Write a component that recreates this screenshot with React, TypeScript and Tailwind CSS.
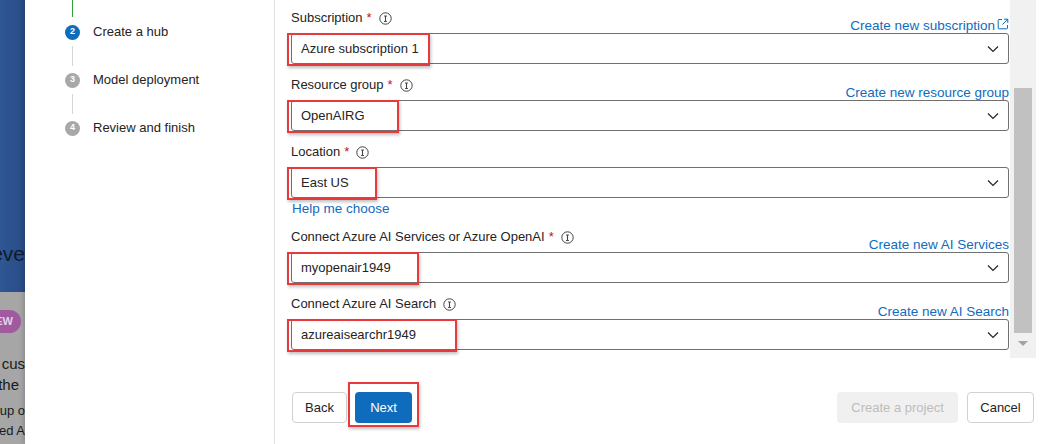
import React from 'react';

const font = { fontFamily: '"Liberation Sans", Arial, sans-serif' };

const InfoIcon = () => (
  <svg width="13" height="13" viewBox="0 0 13 13" className="ml-[7px] shrink-0">
    <circle cx="6.5" cy="6.5" r="5.7" fill="none" stroke="#424242" strokeWidth="1" />
    <line x1="6.5" y1="4" x2="6.5" y2="9.5" stroke="#424242" strokeWidth="1.1" />
    <line x1="5" y1="4" x2="8" y2="4" stroke="#424242" strokeWidth="0.9" />
    <line x1="5" y1="9.5" x2="8" y2="9.5" stroke="#424242" strokeWidth="0.9" />
  </svg>
);

const Chevron = () => (
  <svg width="12" height="8" viewBox="0 0 12 8" className="shrink-0">
    <path d="M1 1.5 L6 6.5 L11 1.5" fill="none" stroke="#242424" strokeWidth="1.2" />
  </svg>
);

const ExternalIcon = () => (
  <svg width="12" height="12" viewBox="0 0 12 12" className="ml-[2px] mb-[3px]">
    <path d="M5 1.5 H2 a0.8 0.8 0 0 0 -0.8 0.8 V10 a0.8 0.8 0 0 0 0.8 0.8 H9.7 a0.8 0.8 0 0 0 0.8 -0.8 V7" fill="none" stroke="#0f6cbd" strokeWidth="1" />
    <path d="M7 1.2 H10.8 V5 M10.8 1.2 L5.5 6.5" fill="none" stroke="#0f6cbd" strokeWidth="1" />
  </svg>
);

type Field = {
  label: string;
  required: boolean;
  link: string;
  external?: boolean;
  value: string;
  mark: number;
  help?: boolean;
};

const fields: Field[] = [
  { label: 'Subscription', required: true, link: 'Create new subscription', external: true, value: 'Azure subscription 1', mark: 143 },
  { label: 'Resource group', required: true, link: 'Create new resource group', value: 'OpenAIRG', mark: 112 },
  { label: 'Location', required: true, link: '', value: 'East US', mark: 90, help: true },
  { label: 'Connect Azure AI Services or Azure OpenAI', required: true, link: 'Create new AI Services', value: 'myopenair1949', mark: 132 },
  { label: 'Connect Azure AI Search', required: false, link: 'Create new AI Search', value: 'azureaisearchr1949', mark: 170 },
];

const steps = [
  { n: 2, label: 'Create a hub', active: true },
  { n: 3, label: 'Model deployment', active: false },
  { n: 4, label: 'Review and finish', active: false },
];

const App: React.FC = () => {
  return (
    <div className="w-[1048px] h-[444px] flex overflow-hidden bg-white text-[#242424]" style={font}>
      {/* page behind the dialog */}
      <div className="w-[25px] h-full flex flex-col shrink-0 overflow-hidden">
        <div className="h-[292px] bg-gradient-to-r from-[#2f5794] to-[#284c85] flex flex-col justify-end pb-[26px] overflow-hidden">
          <div className="flex justify-end whitespace-nowrap text-[21px] leading-[24px] text-[#0d1b33]">Achieve</div>
        </div>
        <div className="flex-1 bg-[#a6a6a6] flex flex-col overflow-hidden">
          <div className="flex justify-end mt-[18px] mr-[4px] whitespace-nowrap">
            <span className="bg-[#a05aa0] text-[#e8d0e8] text-[11px] font-bold leading-[23px] px-[8px] rounded-full">NEW</span>
          </div>
          <div className="flex justify-end mt-[20px] whitespace-nowrap text-[15px] leading-[21px] text-[#1a1a1a]">Build cus</div>
          <div className="flex justify-end mr-[6px] whitespace-nowrap text-[15px] leading-[21px] text-[#1a1a1a]">with the</div>
          <div className="flex justify-end mt-[6px] whitespace-nowrap text-[13px] leading-[20px] text-[#1a1a1a]">Sign up o</div>
          <div className="flex justify-end whitespace-nowrap text-[13px] leading-[20px] text-[#1a1a1a]">powered A</div>
        </div>
      </div>

      {/* dialog */}
      <div className="flex-1 h-full flex bg-white shadow-[-2px_0_4px_rgba(0,0,0,0.15)]">
        {/* steps */}
        <div className="w-[250px] h-full border-r border-[#e0e0e0] pl-[40px] flex flex-col">
          <div className="w-px h-[17px] ml-[7px] bg-[#2e9d3a]" />
          {steps.map((s, i) => (
            <div key={s.n} className="flex flex-col">
              {i > 0 && <div className="w-px h-[20px] ml-[7px] my-[6px] bg-[#d6d6d6]" />}
              <div className={`flex items-center ${i === 0 ? 'mt-[7px]' : ''}`}>
                <div
                  className={`w-[15px] h-[15px] rounded-full flex items-center justify-center text-[9px] font-bold text-white ${
                    s.active ? 'bg-[#0f6cbd]' : 'bg-[#a8a8a8]'
                  }`}
                >
                  {s.n}
                </div>
                <span className="ml-[13px] text-[13px] leading-[16px]">{s.label}</span>
              </div>
            </div>
          ))}
        </div>

        {/* form */}
        <div className="flex-1 h-full flex flex-col">
          <div className="h-[358px] flex">
            <div className="flex-1 pl-[16px] pt-[10px] flex flex-col gap-[13px]">
              {fields.map((f) => (
                <div key={f.label} className="flex flex-col">
                  <div className="h-[23px] flex items-end justify-between">
                    <div className="flex items-center pb-[7px] text-[13px] leading-[16px]">
                      <span>{f.label}</span>
                      {f.required && <span className="ml-[4px] text-[#c50f1f]">*</span>}
                      <InfoIcon />
                    </div>
                    {f.link && (
                      <div className="flex items-end text-[13.5px] leading-[14px] text-[#0f6cbd]">
                        {f.link}
                        {f.external && <ExternalIcon />}
                      </div>
                    )}
                  </div>
                  <div className="relative h-[31px] border border-[#707070] rounded-[3px] flex items-center justify-between pl-[9px] pr-[9px]">
                    <span className="text-[13px]">{f.value}</span>
                    <Chevron />
                    <div
                      className="absolute left-[-5px] top-[-1px] bottom-[-3px] border-2 border-[#e8393c] shadow-[1px_2px_3px_rgba(0,0,0,0.25)]"
                      style={{ width: f.mark }}
                    />
                  </div>
                  {f.help && (
                    <div className="mt-[4px] ml-[1px] text-[13.5px] leading-[14px] text-[#0f6cbd]">Help me choose</div>
                  )}
                </div>
              ))}
            </div>
            {/* scrollbar */}
            <div className="w-[26px] ml-[1px] mr-[12px] h-full bg-[#f1f1f1] flex flex-col items-center">
              <div className="w-[18px] mt-[88px] h-[245px] bg-[#c1c1c1]" />
              <div className="mt-[8px] w-0 h-0 border-l-[5px] border-r-[5px] border-t-[5px] border-l-transparent border-r-transparent border-t-[#a3a3a3]" />
            </div>
          </div>

          {/* footer */}
          <div className="flex items-center pl-[17px] pr-[14px] mt-[34px]">
            <button className="h-[31px] w-[55px] border border-[#d1d1d1] rounded-[4px] text-[13px] bg-white">Back</button>
            <div className="relative ml-[8px]">
              <button className="h-[31px] w-[57px] rounded-[4px] text-[13px] bg-[#0f6cbd] text-white">Next</button>
              <div className="absolute left-[-7px] top-[-10px] w-[71px] h-[45px] border-2 border-[#e8393c] shadow-[1px_2px_3px_rgba(0,0,0,0.25)]" />
            </div>
            <div className="flex-1" />
            <button className="h-[31px] w-[121px] rounded-[4px] text-[13px] bg-[#f0f0f0] text-[#bdbdbd]">Create a project</button>
            <button className="h-[31px] w-[67px] ml-[9px] border border-[#d1d1d1] rounded-[4px] text-[13px] bg-white">Cancel</button>
          </div>
        </div>
      </div>
    </div>
  );
};

export default App;
